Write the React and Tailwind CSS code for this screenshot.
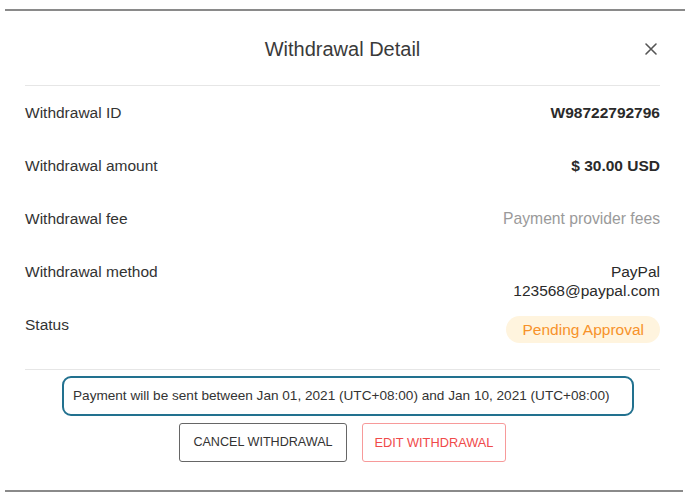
import React from "react";

const rows = [
  { label: "Withdrawal ID", value: "W98722792796", kind: "bold" },
  { label: "Withdrawal amount", value: "$ 30.00 USD", kind: "bold" },
  { label: "Withdrawal fee", value: "Payment provider fees", kind: "muted" },
  { label: "Withdrawal method", value: ["PayPal", "123568@paypal.com"], kind: "medium" },
];

const Row = ({ label, value, kind }) => (
  <div className="flex justify-between items-start h-[53px]">
    <span className="text-[15.5px] leading-5 text-[#333]">{label}</span>
    {kind === "bold" && (
      <span className="text-[15.5px] leading-5 font-semibold text-[#2a2a2a]">{value}</span>
    )}
    {kind === "muted" && (
      <span className="text-[15.7px] leading-5 text-[#9a9a9a]">{value}</span>
    )}
    {kind === "medium" && (
      <div className="flex flex-col items-end text-[15.5px] leading-[19px] text-[#2a2a2a]">
        {value.map((v) => (
          <span key={v}>{v}</span>
        ))}
      </div>
    )}
  </div>
);

export default function App() {
  return (
    <div
      className="w-[700px] h-[501px] bg-white overflow-hidden flex flex-col"
      style={{ fontFamily: '"Liberation Sans", Arial, sans-serif' }}
    >
      <div className="mt-[9px] ml-[5px] w-[680px] h-[2px] bg-[#8a8a8a]"></div>

      <div className="ml-[25px] w-[635px] flex flex-col">
        <div className="h-[74px] grid grid-cols-[1fr_auto_1fr] items-center">
          <div></div>
          <h2 className="text-[20px] text-[#3a3a3a] pt-[1px]">Withdrawal Detail</h2>
          <button className="justify-self-end mr-[2px] mt-[1px] text-[#555]">
            <svg width="14" height="14" viewBox="0 0 14 14" fill="none" stroke="currentColor" strokeWidth="1.6" strokeLinecap="round">
              <path d="M2 2L12 12M12 2L2 12" />
            </svg>
          </button>
        </div>

        <div className="border-t border-[#e6e6e6]"></div>

        <div className="pt-[17px] flex flex-col">
          {rows.map((r) => (
            <Row key={r.label} {...r} />
          ))}
          <div className="flex justify-between items-start h-[54px]">
            <span className="text-[15.5px] leading-5 text-[#333]">Status</span>
            <span className="mt-[1px] h-[27px] px-[16px] flex items-center rounded-full bg-[#fff4de] text-[15.5px] text-[#f7922a]">
              Pending Approval
            </span>
          </div>
        </div>

        <div className="border-t border-[#e6e6e6]"></div>

        <div className="mt-[6px] ml-[37px] w-[572px] h-[40px] border-2 border-[#22718f] rounded-[9px] flex items-center pl-[9px]">
          <span className="text-[13.6px] text-[#333]">
            Payment will be sent between Jan 01, 2021 (UTC+08:00) and Jan 10, 2021 (UTC+08:00)
          </span>
        </div>

        <div className="mt-[7px] flex justify-center gap-[15px]">
          <button className="w-[168px] h-[39px] border border-[#666] rounded-[3px] text-[12.6px] text-[#333]">
            CANCEL WITHDRAWAL
          </button>
          <button className="w-[144px] h-[39px] border border-[#f79a9a] rounded-[3px] text-[12.8px] text-[#f04a4a]">
            EDIT WITHDRAWAL
          </button>
        </div>
      </div>

      {/* bottom edge of the table behind the modal */}
      <div className="mt-[28px] ml-[5px] w-[678px] h-[2px] bg-[#8a8a8a]"></div>
    </div>
  );
}
